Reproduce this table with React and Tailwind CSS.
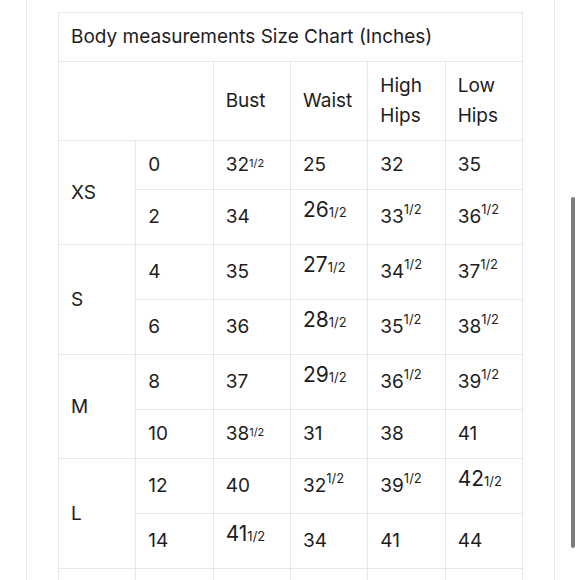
import React from 'react'

// '^' = raised half, '_' = large number with half at baseline
const sizes = [
    { size: 'XS', rows: [['0', '32^', '25', '32', '35'], ['2', '34', '26_', '33^', '36^']] },
    { size: 'S', rows: [['4', '35', '27_', '34^', '37^'], ['6', '36', '28_', '35^', '38^']] },
    { size: 'M', rows: [['8', '37', '29_', '36^', '39^'], ['10', '38^', '31', '38', '41']] },
    { size: 'L', rows: [['12', '40', '32^', '39^', '42_'], ['14', '41_', '34', '41', '44']] },
]

const cell = 'border border-[#e7e6e4] px-3 py-[9px] align-middle'

const Val = ({ v, tall }) => {
    if (v.endsWith('_')) {
        return (
            <div className="h-[36px] leading-[21px]">
                <span className="text-[21px]">{v.slice(0, -1)}</span>
                <span className="text-[13px]">1/2</span>
            </div>
        )
    }
    if (v.endsWith('^')) {
        return (
            <>
                {v.slice(0, -1)}
                <span className={tall ? 'relative -top-[9px] text-[13px] leading-none' : 'relative -top-[4px] text-[11px] leading-none'}>1/2</span>
            </>
        )
    }
    return v
}

export default function App() {
    return (
        <div className="h-[580px] w-[580px] overflow-hidden bg-white relative" style={{ fontFamily: 'Inter, "Noto Sans", sans-serif' }}>
            <div className="ml-[26px] w-[529px] h-full border-x border-[#ecebea] px-[31px] pt-3">
                <table className="w-[465px] table-fixed border-collapse text-[19px] leading-[30px] text-[#1d1d1d]">
                    <tbody>
                        <tr>
                            <td colSpan={6} className={cell}>Body measurements Size Chart (Inches)</td>
                        </tr>
                        <tr>
                            <td colSpan={2} className={cell}></td>
                            <td className={cell}>Bust</td>
                            <td className={cell}>Waist</td>
                            <td className={cell}>High Hips</td>
                            <td className={cell}>Low Hips</td>
                        </tr>
                        {sizes.map(group =>
                            group.rows.map((row, i) => {
                                const tall = row.some(v => v.endsWith('_'))
                                return (
                                    <tr key={group.size + i}>
                                        {i === 0 && <td rowSpan={2} className={cell}>{group.size}</td>}
                                        {row.map((v, j) => (
                                            <td key={j} className={cell}><Val v={v} tall={tall} /></td>
                                        ))}
                                    </tr>
                                )
                            })
                        )}
                        {/* next size row, scrolled out of view */}
                        <tr>
                            {[0, 1, 2, 3, 4, 5].map(j => (
                                <td key={j} className={`${cell} h-[49px]`}></td>
                            ))}
                        </tr>
                    </tbody>
                </table>
            </div>
            {/* scrollbar thumb */}
            <div className="absolute left-[571px] top-[197px] w-[4px] h-[351px] rounded-full bg-[#7d7d7d]" />
        </div>
    )
}
